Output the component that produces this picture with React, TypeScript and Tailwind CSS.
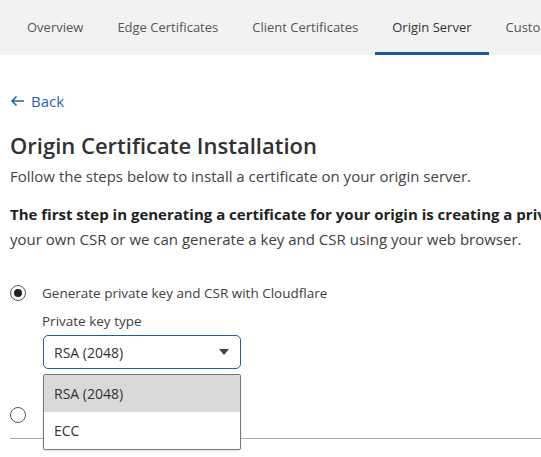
import React, { useState } from "react";

const tabs = ["Overview", "Edge Certificates", "Client Certificates", "Origin Server", "Custom Hostnames"];

const Radio = ({ checked }: { checked: boolean }) => (
  <span className="flex h-[16px] w-[16px] shrink-0 items-center justify-center rounded-full border border-[#555] bg-white">
    {checked ? <span className="h-[8px] w-[8px] rounded-full bg-[#222]" /> : null}
  </span>
);

const App = () => {
  const [keyType, setKeyType] = useState<string>("RSA (2048)");
  const [open] = useState<boolean>(true);

  return (
    <div className="h-[457px] w-[541px] overflow-hidden bg-white font-['Open_Sans',sans-serif] text-[#404040]">
      {/* tab strip */}
      <div className="flex h-[55px] items-stretch whitespace-nowrap bg-[#f2f2f2] pl-[10px]">
        {tabs.map((t) => (
          <div
            key={t}
            className={
              t === "Origin Server"
                ? "flex items-center border-b-[3px] border-[#1a5a9c] px-[17px] pt-[3px] text-[13px] text-[#333]"
                : "flex items-center border-b-[3px] border-transparent px-[17px] pt-[3px] text-[13px] text-[#555]"
            }
          >
            {t}
          </div>
        ))}
      </div>

      <div className="px-[10px]">
        <a className="mt-[35px] flex items-center gap-[6px] text-[15px] text-[#1f66b1]">
          <svg width="15" height="12" viewBox="0 0 15 12" fill="none" stroke="currentColor" strokeWidth="1.6">
            <path d="M14 6H2M6.5 1.5L2 6l4.5 4.5" />
          </svg>
          Back
        </a>

        <h1 className="mt-[17px] text-[22px] font-semibold leading-[30px] text-[#313131]">
          Origin Certificate Installation
        </h1>
        <p className="mt-[5px] text-[15px] leading-[22px] text-[#444]">
          Follow the steps below to install a certificate on your origin server.
        </p>

        <div className="mt-[15px] whitespace-nowrap text-[15px] leading-[25px] text-[#404040]">
          <p className="font-bold text-[#222]">
            The first step in generating a certificate for your origin is creating a private key and a CSR.
          </p>
          <p>your own CSR or we can generate a key and CSR using your web browser.</p>
        </div>

        <div className="mt-[31px] flex items-center gap-[16px]">
          <Radio checked />
          <span className="text-[13.5px]">Generate private key and CSR with Cloudflare</span>
        </div>

        <div className="ml-[32px] mt-[8px] text-[13.5px]">Private key type</div>

        <div className="relative ml-[33px] mt-[4px] w-[198px]">
          <div className="flex h-[34px] items-center justify-between rounded-[5px] border border-[#1d5fa5] px-[10px] text-[14px] text-[#333]">
            <span>{keyType}</span>
            <svg width="10" height="6" viewBox="0 0 10 6" className="mr-[1px]">
              <path d="M0 0h10L5 6z" fill="#444" />
            </svg>
          </div>

          {open ? (
            <ul className="absolute left-0 top-[39px] z-10 w-[198px] rounded-[2px] border border-[#777] bg-white text-[14px] text-[#333] shadow-sm">
              {["RSA (2048)", "ECC"].map((o) => (
                <li
                  key={o}
                  onClick={() => setKeyType(o)}
                  className={o === keyType ? "flex h-[37px] items-center bg-[#d9d9d9] px-[10px]" : "flex h-[37px] items-center px-[10px]"}
                >
                  {o}
                </li>
              ))}
            </ul>
          ) : null}
        </div>

        {/* second option, its label sits under the open list */}
        <div className="mt-[38px] flex items-center">
          <Radio checked={false} />
        </div>

        <div className="-mr-[10px] mt-[15px] h-px bg-[#aaa]" />
      </div>
    </div>
  );
};

export default App;
